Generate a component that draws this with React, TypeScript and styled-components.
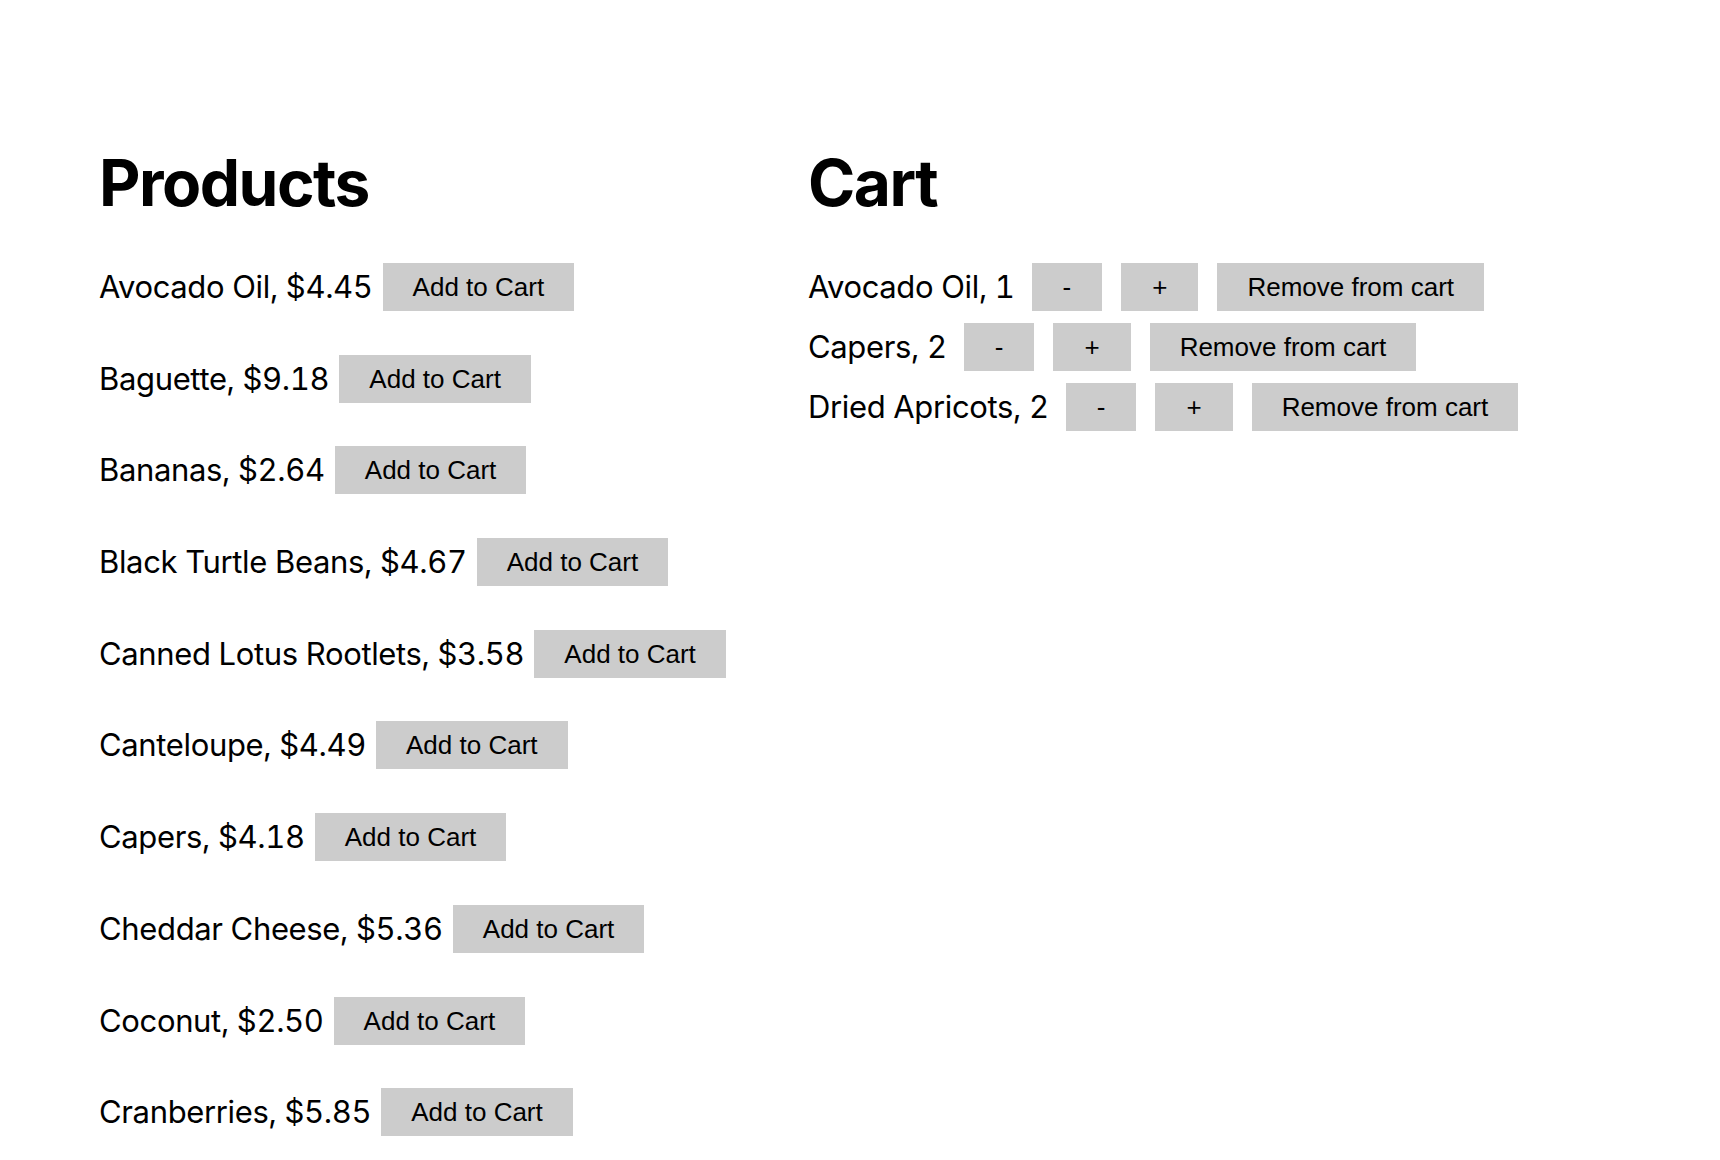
import React from "react";
import styled, { createGlobalStyle } from "styled-components";

const Global = createGlobalStyle`
  html, body { margin: 0; padding: 0; background: #ffffff; }
  body { font-family: Inter, "Noto Sans", sans-serif; color: #000; }
`;

const Page = styled.div`
  display: grid;
  grid-template-columns: 709px 1fr;
  padding: 151px 0 0 99px;
`;

const Column = styled.section`
  display: flex;
  flex-direction: column;
`;

const Heading = styled.h1`
  margin: 0 0 48px;
  font-family: Inter, sans-serif;
  font-size: 64px;
  line-height: 64px;
  font-weight: 700;
  letter-spacing: -1.5px;
`;

const List = styled.div<{ $gap: number }>`
  display: flex;
  flex-direction: column;
  gap: ${(p) => p.$gap}px;
`;

const Row = styled.div`
  display: flex;
  align-items: center;
  height: 48px;
`;

const Label = styled.span<{ $space: number }>`
  font-family: Inter, sans-serif;
  font-size: 31px;
  line-height: 48px;
  letter-spacing: -0.35px;
  font-variant-numeric: tabular-nums;
  margin-right: ${(p) => p.$space}px;
  white-space: nowrap;
`;

const Button = styled.button<{ $spaceAfter?: number; $narrow?: boolean }>`
  height: 48px;
  padding: 0 ${(p) => (p.$narrow ? 31 : 30)}px;
  margin: 0 ${(p) => p.$spaceAfter ?? 0}px 0 0;
  border: none;
  border-radius: 0;
  background: #cccccc;
  color: #000;
  font-family: "Liberation Sans", Arial, sans-serif;
  font-size: 26px;
  line-height: 48px;
  cursor: pointer;
`;

const products = [
  ["Avocado Oil", "4.45"],
  ["Baguette", "9.18"],
  ["Bananas", "2.64"],
  ["Black Turtle Beans", "4.67"],
  ["Canned Lotus Rootlets", "3.58"],
  ["Canteloupe", "4.49"],
  ["Capers", "4.18"],
  ["Cheddar Cheese", "5.36"],
  ["Coconut", "2.50"],
  ["Cranberries", "5.85"],
];

const cart = [
  ["Avocado Oil", 1],
  ["Capers", 2],
  ["Dried Apricots", 2],
];

export default function App() {
  return (
    <>
      <Global />
      <Page>
        <Column>
          <Heading>Products</Heading>
          <List $gap={43.7}>
            {products.map(([name, price]) => (
              <Row key={name}>
                <Label $space={10}>
                  {name}, ${price}
                </Label>
                <Button>Add to Cart</Button>
              </Row>
            ))}
          </List>
        </Column>
        <Column>
          <Heading>Cart</Heading>
          <List $gap={12}>
            {cart.map(([name, qty]) => (
              <Row key={String(name)}>
                <Label $space={17}>
                  {name}, {qty}
                </Label>
                <Button $narrow $spaceAfter={19}>-</Button>
                <Button $narrow $spaceAfter={19}>+</Button>
                <Button>Remove from cart</Button>
              </Row>
            ))}
          </List>
        </Column>
      </Page>
    </>
  );
}
